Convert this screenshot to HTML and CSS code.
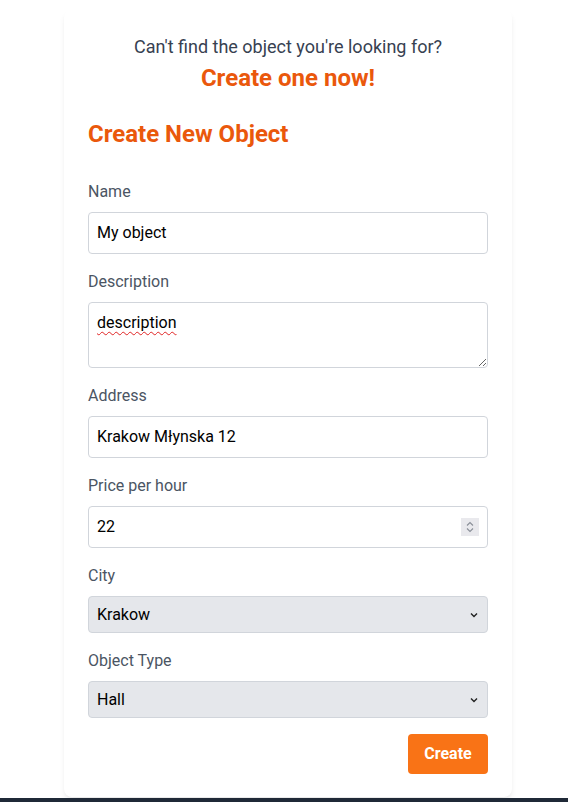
FILE: index.html
```html
<!DOCTYPE html>
<html lang="en">
<head>
<meta charset="utf-8">
<title>Create New Object</title>
<link rel="stylesheet" href="styles.css">
</head>
<body>
<main class="page">
  <section class="card">
    <div class="intro">
      <p class="intro-text">Can't find the object you're looking for?</p>
      <p class="intro-cta">Create one now!</p>
    </div>
    <h2 class="title">Create New Object</h2>
    <form class="form">
      <div class="field">
        <label class="label">Name</label>
        <input class="control" type="text" value="My object">
      </div>
      <div class="field">
        <label class="label">Description</label>
        <div class="control textarea"><span class="misspelled">description</span></div>
      </div>
      <div class="field">
        <label class="label">Address</label>
        <input class="control" type="text" value="Krakow Młynska 12">
      </div>
      <div class="field">
        <label class="label">Price per hour</label>
        <div class="control number">
          <input class="number-input" type="text" value="22">
          <span class="spinner">
            <svg width="10" height="14" viewBox="0 0 10 14"><path d="M2 5.5 L5 2.5 L8 5.5" fill="none" stroke="#8a8f98" stroke-width="1.1"/><path d="M2 8.5 L5 11.5 L8 8.5" fill="none" stroke="#8a8f98" stroke-width="1.1"/></svg>
          </span>
        </div>
      </div>
      <div class="field">
        <label class="label">City</label>
        <select class="control select"><option>Krakow</option></select>
      </div>
      <div class="field">
        <label class="label">Object Type</label>
        <select class="control select"><option>Hall</option></select>
      </div>
      <div class="actions">
        <button class="btn" type="button">Create</button>
      </div>
    </form>
  </section>
</main>
<footer class="footer"></footer>
</body>
</html>
```

FILE: styles.css
```css
* { box-sizing: border-box; }
html, body { margin: 0; padding: 0; }
body {
  background: #ffffff;
  font-family: Roboto, "Liberation Sans", Arial, sans-serif;
  color: #111827;
}
.page {
  padding: 10px 0 1px 8px;
}
.card {
  width: 448px;
  margin: 0 auto;
  background: #fff;
  border-radius: 8px;
  box-shadow: 0 4px 6px -1px rgba(0,0,0,0.08), 0 2px 4px -2px rgba(0,0,0,0.06);
  padding: 23px 24px 23px;
}
.intro { text-align: center; }
.intro-text {
  margin: 0;
  font-size: 18px;
  line-height: 28px;
  color: #374151;
}
.intro-cta {
  margin: 1px 0 0;
  font-size: 24px;
  line-height: 32px;
  font-weight: 700;
  color: #ea580c;
}
.title {
  margin: 24px 0 30px;
  font-size: 24px;
  line-height: 32px;
  font-weight: 700;
  color: #ea580c;
}
.form {
  display: flex;
  flex-direction: column;
  gap: 16px;
}
.field {
  display: flex;
  flex-direction: column;
}
.label {
  font-size: 16px;
  line-height: 24px;
  color: #4b5563;
  margin-bottom: 8px;
}
.control {
  width: 100%;
  font-family: inherit;
  font-size: 16px;
  line-height: 24px;
  color: #000;
  border: 1px solid #d1d5db;
  border-radius: 4px;
  padding: 8px;
  background: #fff;
  margin: 0;
  outline: none;
}
.textarea {
  height: 66px;
  resize: vertical;
  overflow: auto;
}
.misspelled {
  text-decoration: underline wavy #e02424;
  text-decoration-thickness: 1px;
  text-underline-offset: 3px;
}
.number {
  display: flex;
  align-items: center;
}
.number-input {
  flex: 1;
  border: 0;
  padding: 0;
  margin: 0;
  font-family: inherit;
  font-size: 16px;
  line-height: 24px;
  color: #000;
  outline: none;
  background: transparent;
  min-width: 0;
}
.spinner {
  width: 18px;
  height: 18px;
  background: #e9e9ed;
  display: flex;
  align-items: center;
  justify-content: center;
}
.select {
  -webkit-appearance: none;
  appearance: none;
  height: 37px;
  line-height: 19px;
  padding: 8px 24px 8px 8px;
  background-color: #e5e7eb;
  background-image: url("data:image/svg+xml;utf8,<svg xmlns='http://www.w3.org/2000/svg' width='8' height='6' viewBox='0 0 8 6'><path d='M1 1.5 L4 4.5 L7 1.5' fill='none' stroke='%23222' stroke-width='1.4'/></svg>");
  background-repeat: no-repeat;
  background-position: right 9px center;
  background-size: 8px 6px;
}
.actions {
  display: flex;
  justify-content: flex-end;
}
.btn {
  font-family: inherit;
  font-size: 16px;
  line-height: 24px;
  font-weight: 700;
  color: #fff;
  background: #f97316;
  border: 0;
  border-radius: 4px;
  padding: 8px 16px;
  width: 80px;
}
.footer {
  background: #1f2937;
  height: 4px;
}
```
